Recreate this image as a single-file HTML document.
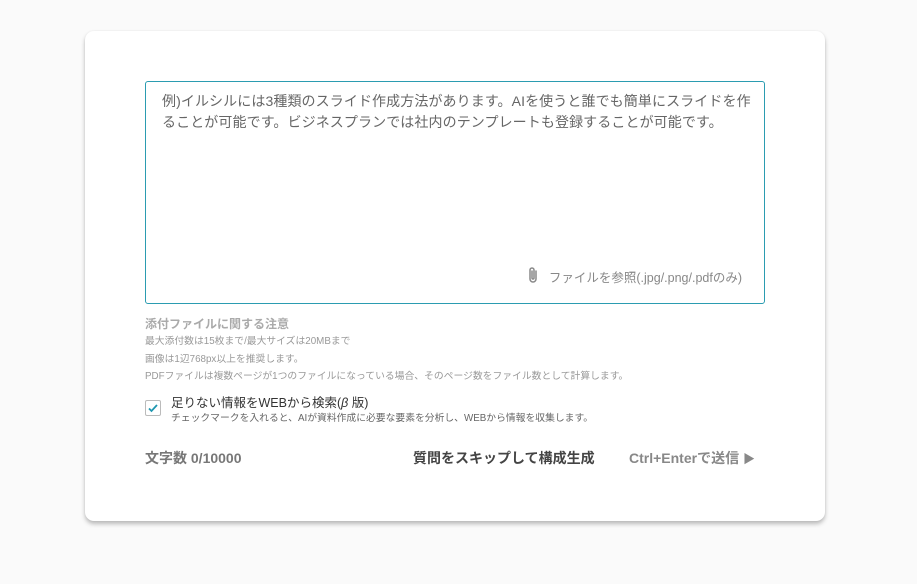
<!DOCTYPE html>
<html><head><meta charset="utf-8"><style>
body{margin:0;width:917px;height:584px;background:#fafafa;font-family:"Liberation Sans","Noto Sans CJK JP",sans-serif;position:relative;overflow:hidden}
.card{position:absolute;left:85px;top:31px;width:740px;height:490px;background:#fff;border-radius:9px;box-shadow:0 3px 4px rgba(0,0,0,.25),0 0 2px rgba(0,0,0,.06)}
.ta{position:absolute;left:145px;top:81px;width:618px;height:221px;border:1px solid #2b9cb1;border-radius:3px}
.t{position:absolute;left:16px;top:9px;width:590px;font-size:14px;line-height:21px;color:#666;letter-spacing:.1px}
.file{position:absolute;right:22px;top:185px;font-size:12.5px;color:#888}
.clip{position:absolute;left:381px;top:184px}
.abs{position:absolute;white-space:nowrap}
</style></head><body>
<div class="card"></div>
<div class="ta">
<div class="t">例)イルシルには3種類のスライド作成方法があります。AIを使うと誰でも簡単にスライドを作ることが可能です。ビジネスプランでは社内のテンプレートも登録することが可能です。</div>
<svg class="clip" width="12" height="18" viewBox="0 0 12 18"><path d="M9 5v8a3 3 0 0 1-6 0V4a2 2 0 0 1 4 0v8a1 1 0 0 1-2 0V5" fill="none" stroke="#888" stroke-width="1.5" stroke-linecap="round"/></svg>
<div class="file">ファイルを参照(.jpg/.png/.pdfのみ)</div>
</div>
<div class="abs" style="left:145px;top:315px;font-size:12px;font-weight:bold;color:#aaa">添付ファイルに関する注意</div>
<div class="abs" style="left:145px;top:333px;font-size:9.8px;line-height:17.5px;color:#999">最大添付数は15枚まで/最大サイズは20MBまで<br>画像は1辺768px以上を推奨します。<br>PDFファイルは複数ページが1つのファイルになっている場合、そのページ数をファイル数として計算します。</div>
<div class="abs" style="left:145px;top:400px;width:16px;height:16px;border:1px solid #bbb;border-radius:2px;box-sizing:border-box"><svg width="14" height="14" viewBox="0 0 14 14"><path d="M3 7.5l2.5 2.5 5.5-6" fill="none" stroke="#1f97b0" stroke-width="1.8"/></svg></div>
<div class="abs" style="left:171px;top:392px;font-size:12.5px;color:#333">足りない情報をWEBから検索(<i>β</i> 版)</div>
<div class="abs" style="left:171px;top:410px;font-size:9.8px;color:#666">チェックマークを入れると、AIが資料作成に必要な要素を分析し、WEBから情報を収集します。</div>
<div class="abs" style="left:145px;top:448px;font-size:14px;font-weight:bold;color:#777">文字数 0/10000</div>
<div class="abs" style="left:413px;top:448px;font-size:14px;font-weight:bold;color:#444">質問をスキップして構成生成</div>
<div class="abs" style="left:629px;top:448px;font-size:14px;font-weight:bold;color:#888">Ctrl+Enterで送信 <span style="font-size:12px">▶</span></div>
</body></html>
